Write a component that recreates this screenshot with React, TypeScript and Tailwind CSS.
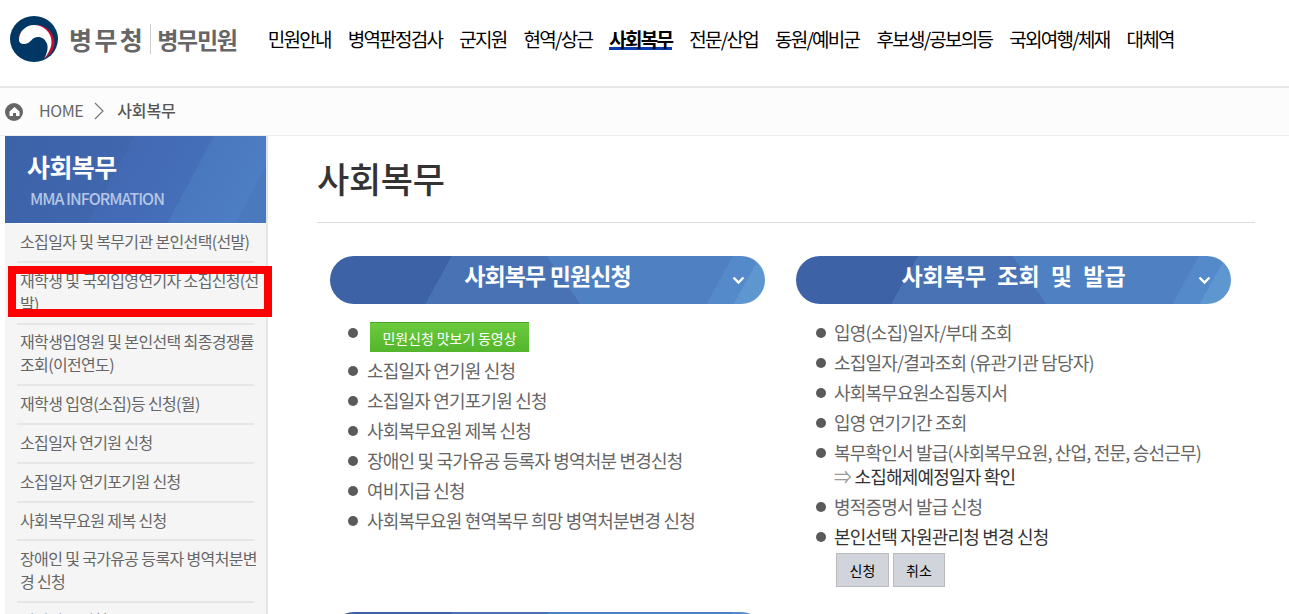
import type { ReactNode } from "react";

const font = "font-['Noto_Sans_CJK_KR','Noto_Sans',sans-serif]";

const navItems = [
  "민원안내",
  "병역판정검사",
  "군지원",
  "현역/상근",
  "사회복무",
  "전문/산업",
  "동원/예비군",
  "후보생/공보의등",
  "국외여행/체재",
  "대체역",
];

const sideItems = [
  "소집일자 및 복무기관 본인선택(선발)",
  "재학생 및 국외입영연기자 소집신청(선발)",
  "재학생입영원 및 본인선택 최종경쟁률 조회(이전연도)",
  "재학생 입영(소집)등 신청(월)",
  "소집일자 연기원 신청",
  "소집일자 연기포기원 신청",
  "사회복무요원 제복 신청",
  "장애인 및 국가유공 등록자 병역처분변경 신청",
  "여비지급 신청",
];

const leftList = [
  "소집일자 연기원 신청",
  "소집일자 연기포기원 신청",
  "사회복무요원 제복 신청",
  "장애인 및 국가유공 등록자 병역처분 변경신청",
  "여비지급 신청",
  "사회복무요원 현역복무 희망 병역처분변경 신청",
];

function Logo() {
  return (
    <svg width="48" height="46" viewBox="0 0 48 48" preserveAspectRatio="none">
      <circle cx="24" cy="24" r="24" fill="#003764" />
      <path d="M7.5 26A18.5 18.5 0 1 1 34 44.5C40 38 42 32 40 26 37 15 26 10 16 13 10 15 8 20 7.5 26Z" fill="#c60c30" />
      <path d="M9 25C9 16 16 9.5 24 9.5 33 9.5 41.5 17 41.5 27 41.5 33 38 40 34 44.5 37 40 38.5 33 37 29 35 23 29 20 24 23 21 25 20 28 16 29 12 30 9 28 9 25Z" fill="#fff" />
    </svg>
  );
}

function SectionBar({ title, spaced }: { title?: string; spaced?: boolean }) {
  return (
    <div className="relative flex h-12 items-center justify-center rounded-full bg-[linear-gradient(119deg,#3d62a6_26.4%,transparent_26.4%),linear-gradient(119deg,transparent_93.2%,#5e96d0_93.2%),linear-gradient(119deg,transparent_87.3%,#558aca_87.3%),linear-gradient(55deg,#4872b4_53.4%,#4f80c2_53.4%)] pb-[10px]">
      {title && (
        <span className={`text-[23px] font-bold text-white ${spaced ? "[word-spacing:6px]" : "tracking-[-0.9px]"}`}>
          {title}
        </span>
      )}
      <svg className="absolute right-[20px] top-[20px]" width="13" height="9" viewBox="0 0 13 9">
        <path d="M1.5 1.5 6.5 6.5 11.5 1.5" fill="none" stroke="#fff" strokeWidth="2.4" />
      </svg>
    </div>
  );
}

function Bullet({ first }: { first?: boolean }) {
  return <span className={`${first ? "mt-[6px]" : "mt-[10px]"} h-[10px] w-[10px] shrink-0 rounded-full bg-[#5a5a5a]`} />;
}

function Row({ gap, dark, children }: { gap: string; dark?: boolean; children: ReactNode }) {
  return (
    <li className={`flex ${gap} ${dark ? "text-[#333]" : ""}`}>
      <Bullet />
      <div className="-mt-px pb-px">{children}</div>
    </li>
  );
}

export default function App() {
  return (
    <div className={`${font} relative h-[614px] w-[1289px] overflow-hidden bg-white text-[#666]`}>
      {/* header */}
      <header className="flex h-[88px] items-start border-b-2 border-[#e8e8e8] pl-[10px]">
        <div className="mt-[16px] flex items-center">
          <Logo />
          <span className="ml-[11px] text-[25px] font-bold leading-[46px] tracking-[2.4px] text-[#666]">병무청</span>
          <span className="ml-[5px] h-[30px] w-px bg-[#ccc]" />
          <span className="ml-[6px] text-[23px] font-bold leading-[46px] tracking-[-1.3px] text-[#666]">병무민원</span>
        </div>
        <nav className="ml-[31px] mt-[25px] flex gap-[17px] text-[19px] tracking-[-1.73px] text-black">
          {navItems.map((item) =>
            item === "사회복무" ? (
              <span key={item} className="h-[25px] border-b-[3px] border-[#0a3cb0] font-bold leading-[27px]">
                {item}
              </span>
            ) : (
              <span key={item} className="leading-[27px]">
                {item}
              </span>
            )
          )}
        </nav>
      </header>

      {/* breadcrumb */}
      <div className="flex h-[47px] items-center bg-[#fcfcfc] pl-[5px] text-[16px] text-[#666]">
        <span className="flex h-[18px] w-[18px] items-center justify-center rounded-full bg-[#666]">
          <svg width="11" height="11" viewBox="0 0 11 11">
            <path d="M5.5 1 10.5 5.5V10H7V7H4v3H.5V5.5Z" fill="#fff" />
          </svg>
        </span>
        <span className="ml-[16px] pb-[4px] tracking-[-0.4px]">HOME</span>
        <svg className="ml-[11px] -mt-[1px]" width="10" height="18" viewBox="0 0 10 18">
          <path d="M1 1 9 9 1 17" fill="none" stroke="#777" strokeWidth="1.2" />
        </svg>
        <span className="ml-[13px] pb-[4px] font-medium tracking-[-0.2px] text-[#555]">사회복무</span>
      </div>

      <div className="flex border-t border-[#eee]">
        {/* sidebar */}
        <aside className="ml-[5px] w-[263px] shrink-0 border-r-2 border-[#e4e4e4] bg-[#f5f5f5]">
          <div className="h-[87px] bg-[linear-gradient(118deg,#3c62a8_0%,#4067ae_42%,#4369b3_42%,#456fb9_68%,#4a78bf_68%,#4d7dc2_90%,#4a79be_90%)] pl-[22px] pt-[12px]">
            <div className="text-[25px] font-bold leading-[36px] tracking-[-0.6px] text-white">사회복무</div>
            <div className="ml-[3px] mt-[3px] text-[16px] font-medium leading-[22px] tracking-[-1px] text-[#b5c6e6]">MMA INFORMATION</div>
          </div>
          <ul className="mx-[12px] border-t border-white text-[16px] leading-[23px] tracking-[-0.65px]">
            {sideItems.map((item) => (
              <li key={item} className="border-b-2 border-[#e6e6e6] py-[6.9px] pl-[3px]">
                <div className="-mr-[7px] -mt-[1px] pb-[1px]">{item}</div>
              </li>
            ))}
          </ul>
        </aside>

        {/* main */}
        <main className="ml-[49px] w-[938px]">
          <h1 className="pt-[17px] text-[35px] font-medium leading-[50px] tracking-[-0.3px] text-[#333]">사회복무</h1>
          <div className="mt-[19px] border-t border-[#ddd]" />

          <div className="ml-[13px] mt-[33px] flex gap-[31px]">
            <section className="w-[435px]">
              <SectionBar title="사회복무 민원신청" />
              <ul className="ml-[18px] mt-[18px] text-[18px] leading-[30px] tracking-[-0.8px]">
                <li className="flex h-[34px] gap-[12px]">
                  <Bullet first />
                  <span className="flex h-[30px] w-[159px] items-center justify-center border-t border-[#4aa62a] bg-[linear-gradient(#6ccb3e,#52b52c)] text-[14px] tracking-[-0.1px] text-white">
                    민원신청 맛보기 동영상
                  </span>
                </li>
                {leftList.map((item) => (
                  <Row key={item} gap="gap-[9px]">
                    {item}
                  </Row>
                ))}
              </ul>
              <div className="mt-[76px]">
                <SectionBar />
              </div>
            </section>

            <section className="w-[435px]">
              <SectionBar title="사회복무 조회 및 발급" spaced />
              <ul className="ml-[20px] mt-[14px] text-[18px] leading-[30px] tracking-[-0.8px]">
                <Row gap="gap-[8px]">입영(소집)일자/부대 조회</Row>
                <Row gap="gap-[8px]">소집일자/결과조회 (유관기관 담당자)</Row>
                <Row gap="gap-[8px]">사회복무요원소집통지서</Row>
                <Row gap="gap-[8px]">입영 연기기간 조회</Row>
                <Row gap="gap-[8px]">
                  <div className="leading-[24px] pt-[3px] pb-[3px]">
                    복무확인서 발급(사회복무요원, 산업, 전문, 승선근무)
                    <br />
                    <span className="text-[#999]">⇒</span> <span className="text-[#333]">소집해제예정일자 확인</span>
                  </div>
                </Row>
                <Row gap="gap-[8px]">병적증명서 발급 신청</Row>
                <Row gap="gap-[8px]" dark>본인선택 자원관리청 변경 신청</Row>
              </ul>
              <div className="ml-[40px] mt-[1px] flex gap-[4px]">
                <button className="h-[34px] w-[53px] border border-[#bbb] bg-[#d1d5db] text-[14px] text-black">신청</button>
                <button className="h-[34px] w-[52px] border border-[#bbb] bg-[#d1d5db] text-[14px] text-black">취소</button>
              </div>
            </section>
          </div>
        </main>
      </div>

      {/* red highlight marker over the second menu item */}
      <div className="absolute left-[8px] top-[266px] h-[51px] w-[264px] border-[8px] border-[#ff0000]" />
    </div>
  );
}
